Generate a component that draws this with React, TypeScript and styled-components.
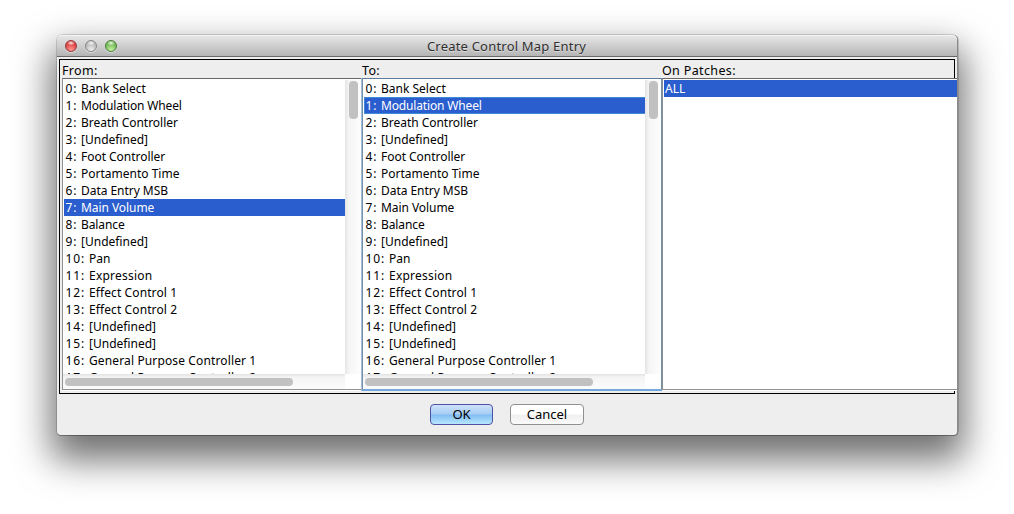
import React from "react";
import styled, { createGlobalStyle, css } from "styled-components";

const Global = createGlobalStyle`
  * { box-sizing: border-box; }
  html, body { margin: 0; background: #fff; overflow: hidden; }
  body { font-family: "Noto Sans", "Open Sans", sans-serif; font-size: 12px; color: #000; }
`;

const Desktop = styled.main`
  width: 1014px;
  height: 514px;
  padding: 35px 56px 0 57px;
`;

const Window = styled.section`
  width: 901px;
  height: 400px;
  display: flex;
  flex-direction: column;
  background: #eee;
  border-right: 1px solid #8a8a8a;
  border-radius: 5px 5px 4px 4px;
  box-shadow: 0 0 0 0.5px rgba(0, 0, 0, 0.3), 0 1px 0 rgba(0, 0, 0, 0.2), 0 19px 36px 6px rgba(0, 0, 0, 0.56);
`;

const TitleBar = styled.header`
  position: relative;
  flex: none;
  height: 22px;
  display: flex;
  align-items: center;
  justify-content: center;
  border-radius: 5px 5px 0 0;
  border-top: 1px solid #f4f4f4;
  border-bottom: 1px solid #686868;
  background: linear-gradient(#e6e6e6, #b5b5b5);
`;

const Title = styled.h1`
  margin: 0 1px 0 0;
  font-size: 13px;
  line-height: 18px;
  font-weight: 400;
  letter-spacing: 0.2px;
  color: #303030;
  text-shadow: 0 1px 0 rgba(255, 255, 255, 0.45);
`;

const Lights = styled.div`
  position: absolute;
  left: 8px;
  top: 4px;
  display: flex;
  gap: 8px;
`;

const Light = styled.i<{ $edge: string; $mid: string; $glow: string }>`
  width: 12px;
  height: 12px;
  border-radius: 50%;
  border: 1px solid ${(p) => p.$edge};
  background: radial-gradient(ellipse 4px 2.5px at 50% 20%, rgba(255, 255, 255, 0.9), transparent),
    radial-gradient(circle 7px at 50% 90%, ${(p) => p.$glow}, ${(p) => p.$mid});
  box-shadow: 0 1px 0 rgba(255, 255, 255, 0.5);
`;

const Frame = styled.div`
  flex: none;
  width: 896px;
  height: 335px;
  margin: 2px 0 0 2px;
  padding: 1px 0 0 2px;
  border: 1px solid #000;
  display: flex;
`;

const Column = styled.div<{ $width: number }>`
  flex: none;
  width: ${(p) => p.$width}px;
`;

const Label = styled.div`
  height: 17px;
  line-height: 19px;
  font-size: 12.5px;
  letter-spacing: 0.36px;
  white-space: nowrap;
`;

const ListBox = styled.div<{ $focused?: boolean; $open?: boolean }>`
  height: ${(p) => (p.$focused ? 313 : 312)}px;
  display: grid;
  grid-template-columns: minmax(0, 1fr) ${(p) => (p.$open ? "0" : p.$focused ? "16px" : "17px")};
  grid-template-rows: minmax(0, 1fr) ${(p) => (p.$open ? "0" : "15px")};
  background: #fff;
  border: 1px solid #929292;
  border-top-color: #666;
  ${(p) => !p.$focused && css`border-right: 0;`}
  ${(p) => p.$open && css`border-left-color: #8b8f94;`}
  ${(p) => !p.$focused && css`box-shadow: 0 1px #fff;`}
  ${(p) =>
    p.$focused &&
    css`
      border: 1px solid #7590ab;
      border-top-color: #587d9e;
      border-bottom: 2px solid #76a9db;
      box-shadow: -1px 0 #a3bdd6;
    `}
`;

const Rows = styled.ul`
  list-style: none;
  margin: 0;
  padding: 1px 0 0 1px;
  overflow: hidden;
`;

const Row = styled.li<{ $selected?: boolean; $focus?: boolean }>`
  height: 17px;
  padding-left: 1px;
  display: flex;
  line-height: 18px;
  white-space: nowrap;
  ${(p) => p.$selected && css`background: #2a5dcd; color: #fff;`}
  ${(p) => p.$focus && css`box-shadow: inset 0 1px #4089d6, inset 0 -1px #4089d6, inset 1px 0 #4089d6;`}
`;

const Index = styled.span<{ $digits: number }>`
  flex: none;
  width: ${(p) => 8 + p.$digits * 8}px;
  padding-left: 0.4px;
  letter-spacing: 0.9px;
`;

const Name = styled.span<{ $tracking: number }>`
  letter-spacing: ${(p) => p.$tracking}px;
`;

const VTrack = styled.div`
  margin-top: 1px;
  padding: 1px 0 0 3.5px;
  background: linear-gradient(90deg, #e4e4e4, #f5f5f5 4px, #fcfcfc 14px, #fff);
`;

const HTrack = styled.div`
  padding: 4px 0 0 2px;
  background: linear-gradient(#e2e2e2, #f4f4f4 3px, #fbfbfb);
`;

const Thumb = styled.div<{ $w: number; $h: number }>`
  width: ${(p) => p.$w}px;
  height: ${(p) => p.$h}px;
  border-radius: 4px;
  background: #c1c1c1;
`;

const Footer = styled.footer`
  display: flex;
  justify-content: center;
  gap: 17px;
  padding: 10px 0 0 0;
`;

const Button = styled.button<{ $primary?: boolean }>`
  width: ${(p) => (p.$primary ? 63 : 74)}px;
  height: 21px;
  padding: 0;
  border: 1px solid #909090;
  border-radius: 4px;
  font: 13px/17px "Noto Sans", sans-serif;
  color: #000;
  background: linear-gradient(#fff 0 48%, #f0f0f0 52%, #fafafa);
  ${(p) =>
    p.$primary &&
    css`
      border-color: #5052a4;
      background: linear-gradient(#cfe2f9 0, #a6cdf5 48%, #81bdf3 52%, #b8e7ff);
    `}
`;

const controllers: [name: string, tracking: number][] = [
  ["Bank Select", 0],
  ["Modulation Wheel", -0.15],
  ["Breath Controller", -0.03],
  ["[Undefined]", 0],
  ["Foot Controller", -0.03],
  ["Portamento Time", 0],
  ["Data Entry MSB", -0.04],
  ["Main Volume", -0.06],
  ["Balance", -0.1],
  ["[Undefined]", 0],
  ["Pan", -0.05],
  ["Expression", 0.23],
  ["Effect Control 1", 0.1],
  ["Effect Control 2", 0.1],
  ["[Undefined]", 0],
  ["[Undefined]", 0],
  ["General Purpose Controller 1", 0.13],
  ["General Purpose Controller 2", 0.13],
];

function ControllerList({ label, selected, focused }: { label: string; selected: number; focused?: boolean }) {
  return (
    <Column $width={300}>
      <Label>{label}</Label>
      <ListBox $focused={focused}>
        <Rows>
          {controllers.map(([name, tracking], i) => (
            <Row key={i} $selected={i === selected} $focus={focused && i === selected}>
              <Index $digits={String(i).length}>{i}:</Index>
              <Name $tracking={tracking}>{name}</Name>
            </Row>
          ))}
        </Rows>
        <VTrack>
          <Thumb $w={9} $h={38} />
        </VTrack>
        <HTrack>
          <Thumb $w={228} $h={8} />
        </HTrack>
      </ListBox>
    </Column>
  );
}

export default function App() {
  return (
    <>
      <Global />
      <Desktop>
        <Window>
          <TitleBar>
            <Lights>
              <Light $edge="#943c3c" $mid="#dc3d3e" $glow="#ff9a94" />
              <Light $edge="#888" $mid="#b8b8b8" $glow="#eee" />
              <Light $edge="#4d7c3c" $mid="#6eb653" $glow="#c6f3a5" />
            </Lights>
            <Title>Create Control Map Entry</Title>
          </TitleBar>
          <Frame>
            <ControllerList label="From:" selected={7} />
            <ControllerList label="To:" selected={1} focused />
            <Column $width={295}>
              <Label>On Patches:</Label>
              <ListBox $open>
                <Rows>
                  <Row $selected>ALL</Row>
                </Rows>
              </ListBox>
            </Column>
          </Frame>
          <Footer>
            <Button $primary>OK</Button>
            <Button>Cancel</Button>
          </Footer>
        </Window>
      </Desktop>
    </>
  );
}
